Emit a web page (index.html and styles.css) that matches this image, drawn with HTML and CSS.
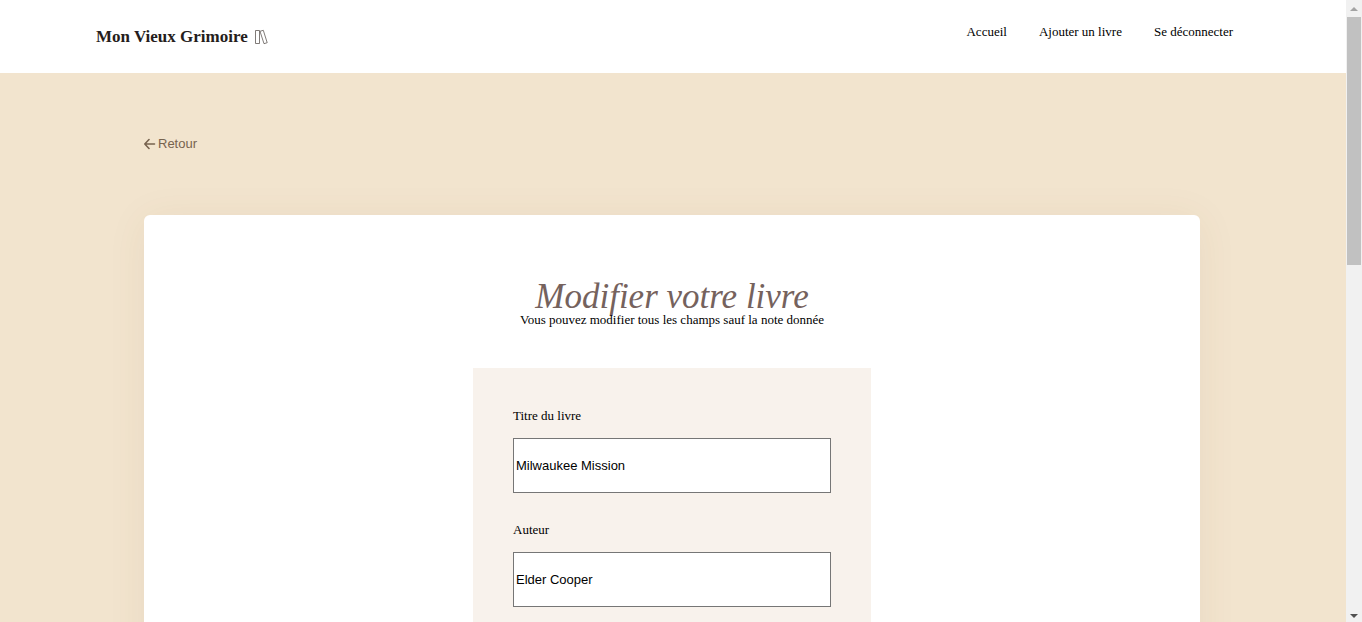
FILE: index.html
```html
<!DOCTYPE html>
<html lang="fr">
<head>
<meta charset="utf-8">
<title>Mon Vieux Grimoire</title>
<link rel="stylesheet" href="styles.css">
</head>
<body>
<div class="viewport">
  <div class="page">
    <header class="header">
      <a class="logo" href="#">Mon Vieux Grimoire
        <svg class="logo-icon" viewBox="0 0 14 16" fill="none" stroke="#5f5956" stroke-width=".8" aria-hidden="true">
          <path d="M1.500 1.500h4v13h-4zM6 2.300 9.300 1.300 13.200 13.700 10 14.700z"/>
        </svg>
      </a>
      <nav class="nav">
        <a href="#">Accueil</a>
        <a href="#">Ajouter un livre</a>
        <a href="#">Se déconnecter</a>
      </nav>
    </header>
    <main class="main">
      <button class="back" type="button">
        <svg class="back-icon" viewBox="0 0 12 12" fill="none" stroke="currentColor" stroke-width="1.600" stroke-linecap="round" stroke-linejoin="round" aria-hidden="true">
          <path d="M5 1.500.800 6 5 10.500M.800 6h9.700"/>
        </svg>
        Retour
      </button>
      <section class="card">
        <h1 class="title">Modifier votre livre</h1>
        <p class="subtitle">Vous pouvez modifier tous les champs sauf la note donnée</p>
        <form class="form">
          <div class="field">
            <label for="title">Titre du livre</label>
            <input id="title" type="text" value="Milwaukee Mission">
          </div>
          <div class="field">
            <label for="author">Auteur</label>
            <input id="author" type="text" value="Elder Cooper">
          </div>
        </form>
      </section>
    </main>
  </div>
  <div class="scrollbar" aria-hidden="true">
    <svg class="arrow arrow-up" viewBox="0 0 8 4"><path d="M4 0l4 4H0z"/></svg>
    <div class="track"><div class="thumb"></div></div>
    <svg class="arrow" viewBox="0 0 8 4"><path d="M0 0h8L4 4z"/></svg>
  </div>
</div>
</body>
</html>
```

FILE: styles.css
```css
* {
  box-sizing: border-box;
}

body,
h1,
p {
  margin: 0;
}

body {
  font: 13px/15px "Liberation Serif", serif;
  color: #000;
  background: #fff;
}

a {
  color: inherit;
  text-decoration: none;
}

.viewport {
  display: flex;
  height: 100vh;
  overflow: hidden;
}

.page {
  display: flex;
  flex: 1;
  flex-direction: column;
  overflow: hidden;
}

.header {
  display: flex;
  justify-content: space-between;
  align-items: flex-start;
  padding: 24px 113px 24px 96px;
}

.logo {
  display: flex;
  align-items: center;
  gap: 6px;
  font-size: 17px;
  line-height: 25px;
  font-weight: bold;
  color: #251d1b;
}

.logo-icon {
  width: 14px;
  height: 16px;
}

.nav {
  display: flex;
  gap: 32px;
}

.main {
  flex: 1 0 auto;
  padding: 63px 146px 0 144px;
  background: #f2e4ce;
}

.back {
  display: flex;
  align-items: center;
  gap: 2px;
  padding: 0;
  border: 0;
  background: none;
  font: 13px/15px "Liberation Sans", sans-serif;
  color: #77634f;
}

.back-icon {
  width: 12px;
  height: 12px;
}

.card {
  display: flex;
  flex-direction: column;
  align-items: center;
  margin-top: 64px;
  padding-top: 66px;
  border-radius: 6px;
  background: #fff;
  box-shadow: 0 4px 40px rgba(120, 90, 40, 0.07);
}

.title {
  font-size: 35px;
  line-height: 31px;
  font-style: italic;
  font-weight: normal;
  color: #75625d;
}

.subtitle {
  margin-bottom: 41px;
}

.form {
  display: flex;
  flex-direction: column;
  gap: 29px;
  width: 398px;
  max-width: 100%;
  padding: 40px 40px 60px;
  background: #f8f2ec;
}

.field {
  display: flex;
  flex-direction: column;
  gap: 15px;
}

.field input {
  height: 55px;
  padding: 1px 2px;
  border: 1px solid #767676;
  border-radius: 0;
  background: #fff;
  font: 13px/15px "Liberation Sans", sans-serif;
  color: #000;
}

.scrollbar {
  display: flex;
  flex-direction: column;
  align-items: center;
  gap: 6px;
  width: 16px;
  padding: 7px 0 4px;
  background: #f1f1f1;
}

.arrow {
  width: 8px;
  height: 4px;
  fill: #505050;
}

.arrow-up {
  fill: #a3a3a3;
}

.track {
  flex: 1;
  width: 14px;
}

.thumb {
  height: 42%;
  background: #c1c1c1;
}
```
